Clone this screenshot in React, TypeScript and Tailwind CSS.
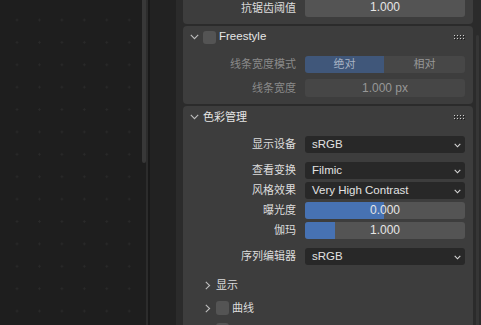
import React from "react";

const font = { fontFamily: '"Liberation Sans","Noto Sans CJK SC",sans-serif' };

function Chevron({ open }: { open: boolean }) {
  return open ? (
    <svg width="9" height="6" viewBox="0 0 9 6" className="shrink-0">
      <path d="M0.8 0.8 L4.5 4.6 L8.2 0.8" fill="none" stroke="#bdbdbd" strokeWidth="1.1" />
    </svg>
  ) : (
    <svg width="6" height="9" viewBox="0 0 6 9" className="shrink-0">
      <path d="M0.8 0.8 L4.6 4.5 L0.8 8.2" fill="none" stroke="#bdbdbd" strokeWidth="1.1" />
    </svg>
  );
}

function Grip() {
  return (
    <svg width="12" height="5" viewBox="0 0 12 5" className="absolute right-[7px]">
      {[0, 3, 6, 9].map((x) =>
        [0, 3].map((y) => (
          <g key={`${x}-${y}`}>
            <rect x={x + 1} y={y + 1} width="1" height="1" fill="#1a1a1a" />
            <rect x={x} y={y} width="1" height="1" fill="#cfcfcf" />
          </g>
        ))
      )}
    </svg>
  );
}

function DropChevron() {
  return (
    <svg width="7" height="5" viewBox="0 0 7 5" className="absolute right-[4px] top-[7px]">
      <path d="M0.7 0.9 L3.5 3.8 L6.3 0.9" fill="none" stroke="#d8d8d8" strokeWidth="1.1" />
    </svg>
  );
}

function Row({
  label,
  dim,
  children,
  className = "",
}: {
  label: string;
  dim?: boolean;
  children: React.ReactNode;
  className?: string;
}) {
  return (
    <div className={`flex items-center h-[17px] ${className}`}>
      <div
        className={`w-[113px] text-right text-[11px] leading-none ${dim ? "text-[#8a8a8a]" : "text-[#dcdcdc]"}`}
      >
        {label}
      </div>
      <div className="ml-[9px] w-[160px] h-full">{children}</div>
    </div>
  );
}

function Dropdown({ value }: { value: string }) {
  return (
    <div className="relative h-full rounded-[3px] bg-[#282828] text-[#e2e2e2] text-[11.5px] leading-[17px] pl-[7px]">
      {value}
      <DropChevron />
    </div>
  );
}

function Slider({ value, fill }: { value: string; fill: number }) {
  return (
    <div className="relative h-full rounded-[3px] bg-[#545454] overflow-hidden">
      <div className="absolute left-0 top-0 h-full bg-[#4772b3]" style={{ width: fill }} />
      <div className="relative text-center text-[12px] leading-[17px] text-[#e6e6e6]">{value}</div>
    </div>
  );
}

export default function App() {
  return (
    <div className="flex w-[481px] h-[325px] overflow-hidden bg-[#2b2b2b]" style={font}>
      {/* viewport */}
      <div className="relative w-[146px] h-full bg-[#1e1e1e] bg-[radial-gradient(circle,#2a2a2a_0.9px,transparent_1.3px)] bg-[length:22.45px_22.4px] bg-[position:5.8px_8.8px]">
        <div className="absolute right-0 top-0 w-[4px] h-[163px] bg-[#383838] rounded-b-[2px]" />
      </div>
      <div className="w-[2px] h-full bg-[#2c2c2c]" />
      <div className="w-[2px] h-full bg-[#191919]" />
      <div className="w-[26px] h-full bg-[#222222]" />

      {/* properties editor */}
      <div className="relative flex-1 h-full bg-[#2b2b2b] pl-[7px]">
        <div className="absolute right-[2px] top-[35px] w-[3px] h-[300px] bg-[#363636] rounded-t-[2px]" />
        <div className="w-[290px] flex flex-col">
          {/* panel 1 (cut) */}
          <div className="h-[24px] bg-[#3d3d3d] rounded-b-[4px]">
            <Row label="抗锯齿阈值" className="h-[16px]">
              <div className="h-full rounded-b-[3px] bg-[#545454] text-center text-[12px] leading-[15px] text-[#e6e6e6]">
                1.000
              </div>
            </Row>
          </div>

          {/* Freestyle panel */}
          <div className="mt-[2px] h-[78px] bg-[#3d3d3d] rounded-[4px]">
            <div className="relative flex items-center h-[22px] pl-[7px]">
              <Chevron open />
              <div className="ml-[4px] w-[13px] h-[13px] rounded-[3px] bg-[#545454]" />
              <span className="ml-[3px] text-[11.5px] text-[#e6e6e6] leading-none">Freestyle</span>
              <Grip />
            </div>
            <Row label="线条宽度模式" dim className="mt-[8px]">
              <div className="flex h-full text-[11px] leading-[17px]">
                <div className="w-[79px] rounded-l-[3px] bg-[#40577a] text-center text-[#a8b3c4]">绝对</div>
                <div className="flex-1 rounded-r-[3px] bg-[#474747] text-center text-[#979797]">相对</div>
              </div>
            </Row>
            <Row label="线条宽度" dim className="mt-[6px] h-[18px]">
              <div className="h-full rounded-[3px] bg-[#464646] text-center text-[12px] leading-[18px] text-[#979797]">
                1.000 px
              </div>
            </Row>
          </div>

          {/* Color management */}
          <div className="mt-[2px] h-[240px] bg-[#3d3d3d] rounded-t-[4px]">
            <div className="relative flex items-center h-[22px] pl-[7px]">
              <Chevron open />
              <span className="ml-[4px] text-[11px] text-[#e6e6e6] leading-none">色彩管理</span>
              <Grip />
            </div>
            <Row label="显示设备" className="mt-[8px]">
              <Dropdown value="sRGB" />
            </Row>
            <Row label="查看变换" className="mt-[9px]">
              <Dropdown value="Filmic" />
            </Row>
            <Row label="风格效果" className="mt-[3px]">
              <Dropdown value="Very High Contrast" />
            </Row>
            <Row label="曝光度" className="mt-[3px]">
              <Slider value="0.000" fill={79} />
            </Row>
            <Row label="伽玛" className="mt-[3px]">
              <Slider value="1.000" fill={30} />
            </Row>
            <Row label="序列编辑器" className="mt-[9px]">
              <Dropdown value="sRGB" />
            </Row>
            <div className="flex items-center h-[20px] mt-[10px] pl-[22px]">
              <Chevron open={false} />
              <span className="ml-[5px] text-[11px] text-[#dcdcdc] leading-none">显示</span>
            </div>
            <div className="flex items-center h-[20px] mt-[3px] pl-[22px]">
              <Chevron open={false} />
              <div className="ml-[5px] w-[13px] h-[14px] rounded-[3px] bg-[#545454]" />
              <span className="ml-[3px] text-[11px] text-[#dcdcdc] leading-none">曲线</span>
            </div>
            <div className="flex items-center h-[20px] mt-[2px] pl-[33px]">
              <div className="w-[13px] h-[14px] rounded-[3px] bg-[#545454]" />
            </div>
          </div>
        </div>
      </div>
    </div>
  );
}
